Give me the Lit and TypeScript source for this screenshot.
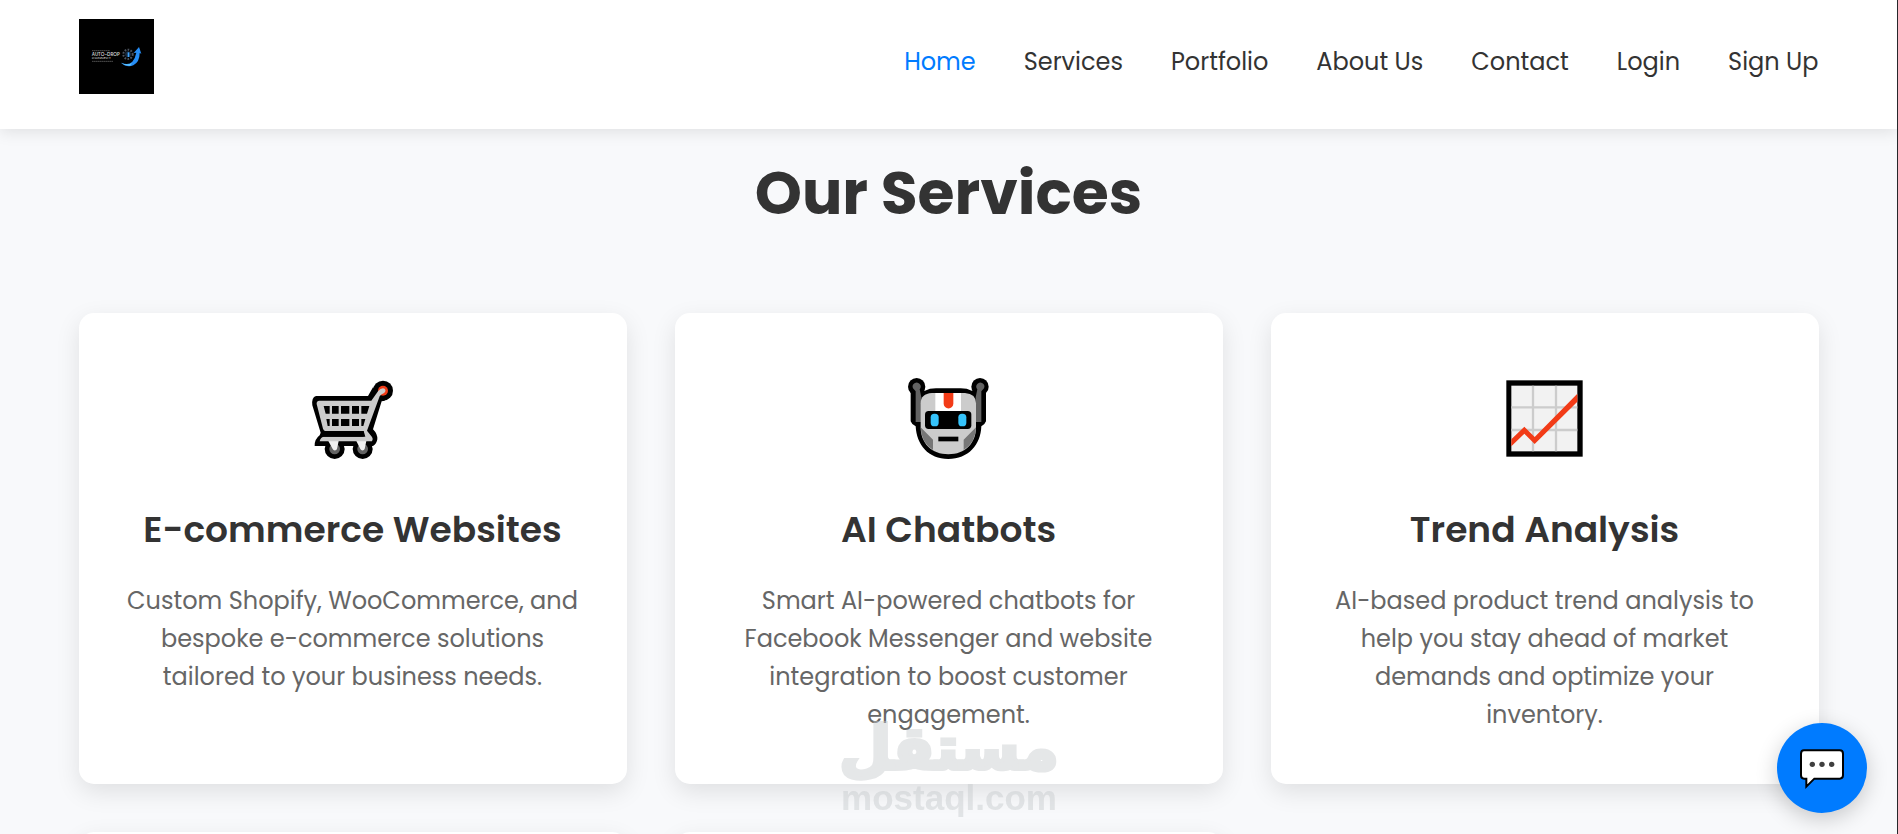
import { LitElement, html, css, svg, nothing } from "lit";
import { customElement, property } from "lit/decorators.js";

const cart = svg`
<svg viewBox="63 51 252 252" width="84" height="84" aria-hidden="true">
  <path d="M78 108 H234 L249 82 L285 122 L275 124 L249 208 Q263 222 262 238 Q260 252 249 258 H74 Q73 238 89 226 L92 218 L67 136 Q64 112 78 108Z" fill="#000"/>
  <circle cx="279" cy="92" r="30" fill="#000"/>
  <circle cx="134" cy="267" r="30" fill="#000"/><circle cx="218" cy="267" r="30" fill="#000"/>
  <circle cx="279" cy="92" r="15" fill="#f23b17"/>
  <circle cx="134" cy="267" r="16" fill="#636363"/><circle cx="218" cy="267" r="16" fill="#636363"/>
  <path d="M115 243 h31 l-5 24 a7 7 0 0 1 -13 0z M199 243 h30 l-5 24 a7 7 0 0 1 -13 0z" fill="#f0f0f0"/>
  <path d="M89 244 Q91 230 104 230 H226 L221 213 H105 Q101 211 99 206 L80 132 Q79 123 88 122 H244 L264 94
    Q274 82 284 86 Q290 93 281 100 Q273 103 269 109 L231 212 L246 231 Q251 238 246 244Z" fill="#ccc"/>
  <path d="M101 138 h18 v23 h-12z M126 138 h20 v23 h-20z M153 138 h25 v23 h-25z M186 138 h21 v23 h-21z M214 138 h24 l-7 23 h-17z
    M109 177 h10 v21 h-6z M126 177 h20 v21 h-20z M153 177 h25 v21 h-25z M186 177 h21 v21 h-21z M214 177 h12 l-6 21 h-6z
    M98 214 H221 V230 H104 Q98 228 92 232Z" fill="#000"/>
</svg>`;

const robot = svg`
<svg viewBox="51 51 252 252" width="84" height="84" aria-hidden="true">
  <circle cx="80" cy="80" r="26" fill="#000"/><circle cx="270" cy="80" r="26" fill="#000"/>
  <path d="M62 90 L105 92 Q118 85 138 85 H212 Q232 85 245 92 L288 90 V184 Q284 195 274 199
    C272 255 235 297 175 297 C115 297 80 255 77 199 Q66 195 62 184Z" fill="#000"/>
  <path d="M69 85 A12 12 0 1 1 89 88 L94 112 V186 H77 V94Z M282 85 A12 12 0 1 0 262 88 L257 112 V186 H274 V94Z" fill="#636363"/>
  <path d="M92 130 Q92 101 126 99 H225 Q258 101 258 130 V202 C258 250 225 283 175 283 C125 283 92 250 92 202Z" fill="#ccc"/>
  <path d="M92 202 L129 239 V270 Q93 248 92 202Z M258 202 L221 239 V270 Q257 248 258 202Z" fill="#777"/>
  <path d="M136 99 H213 V154 H136Z" fill="#fff"/>
  <path d="M161 99 H190 V131 A14.500 14.500 0 0 1 161 131Z" fill="#f23b17"/>
  <rect x="105" y="153" width="139" height="54" rx="11" fill="#000"/>
  <rect x="122" y="161" width="24" height="38" rx="11" fill="#35c3fb"/>
  <rect x="205" y="161" width="24" height="38" rx="11" fill="#35c3fb"/>
  <rect x="145" y="230" width="60" height="14" fill="#000"/>
</svg>`;

const chart = svg`
<svg viewBox="39 51 252 252" width="84" height="84" aria-hidden="true">
  <rect x="49" y="61" width="229" height="229" fill="#000"/>
  <rect x="64" y="77" width="198" height="197" fill="#f2f2f2"/>
  <path d="M129 77 V274 M198 77 V274 M64 142 H262 M64 210 H262" stroke="#ccc" stroke-width="7"/>
  <path d="M64 238 L103 200 L134 231 L262 101 V125 L134 252 L103 221 L64 259Z" fill="#f23b17"/>
</svg>`;

const brand = svg`
<svg class="logo" viewBox="0 0 225 225" role="img" aria-label="Auto-Drop Connect">
  <rect width="225" height="225" fill="#000"/>
  <path d="M39 95 H93 M39 127 H102" stroke="#777" stroke-width="2" stroke-dasharray="5 1"/>
  <text x="38" y="111" fill="#ddd" font-size="14" font-weight="500">AUTO-DROP</text>
  <text x="38" y="121" fill="#bbb" font-size="12" font-weight="500">CONNECT</text>
  <circle cx="147" cy="106" r="14" fill="none" stroke="#4c535e" stroke-width="6" stroke-dasharray="5 4"/>
  <circle cx="147" cy="106" r="9" fill="#17283c"/>
  <path d="M146 100 h5 v14 h-5z" fill="#3ba4ff"/>
  <path d="M126 131 Q148 141 160 128 Q169 117 172 101 L164 102 L180 84 L187 104 L182 102 Q182 129 163 139 Q143 147 126 131Z" fill="#268df5"/>
  <path d="M126 131 Q145 140 159 132 L154 140 Q139 142 126 131Z" fill="#5cc3ff"/>
</svg>`;

const bubble = svg`
<svg viewBox="114 138 144 132" width="48" height="44" aria-hidden="true">
  <path d="M132 151 H239 Q249 151 249 161 V226 Q249 236 239 236 H163 L139 260 V236 H132 Q123 236 123 226 V161 Q123 151 132 151Z"
    fill="#fff" stroke="#000" stroke-width="6"/>
  <circle cx="157" cy="193" r="8" fill="#3f3f3f"/><circle cx="186" cy="193" r="8" fill="#3f3f3f"/><circle cx="215" cy="193" r="8" fill="#3f3f3f"/>
</svg>`;

const links = ["Home", "Services", "Portfolio", "About Us", "Contact", "Login", "Sign Up"];

const services = [
  { icon: cart, title: "E-commerce Websites", text: "Custom Shopify, WooCommerce, and bespoke e-commerce solutions tailored to your business needs." },
  { icon: robot, title: "AI Chatbots", text: "Smart AI-powered chatbots for Facebook Messenger and website integration to boost customer engagement." },
  { icon: chart, title: "Trend Analysis", text: "AI-based product trend analysis to help you stay ahead of market demands and optimize your inventory." },
  { icon: nothing, title: "", text: "" },
  { icon: nothing, title: "", text: "" },
];

@customElement("service-card")
class ServiceCard extends LitElement {
  @property({ attribute: false }) service: any;

  static styles = css`
    :host {
      display: block;
      box-sizing: border-box;
      min-height: 240px;
      padding: 48px 48px 50px;
      border-radius: 15px;
      background: #fff;
      box-shadow: 0 8px 24px rgba(0, 0, 0, 0.1);
      text-align: center;
    }
    .icon {
      display: flex;
      align-items: center;
      justify-content: center;
      height: 116px;
      margin-bottom: 24px;
    }
    .title {
      margin: 0 0 23px;
      font-size: 36px;
      line-height: 58px;
      font-weight: 600;
      color: #333;
    }
    .text {
      margin: 0;
      font-size: 24px;
      line-height: 38px;
      color: #666;
    }
  `;

  render() {
    const s = this.service;
    if (!s.title) return nothing;
    return html`
      <div class="icon">${s.icon}</div>
      <h3 class="title">${s.title}</h3>
      <p class="text">${s.text}</p>
    `;
  }
}

@customElement("app-root")
class AppRoot extends LitElement {
  static styles = css`
    :host {
      display: block;
      box-sizing: border-box;
      height: 100vh;
      overflow: hidden;
      border-right: 1px solid #26282b;
      background: #f8f9fb;
      color: #333;
      font-family: Poppins, Inter, sans-serif;
    }
    .header {
      position: relative;
      z-index: 1;
      padding: 19px 0 24px;
      background: #fff;
      box-shadow: 0 3px 15px rgba(0, 0, 0, 0.1);
    }
    .wrap {
      box-sizing: border-box;
      max-width: 1800px;
      margin: 0 auto;
      padding: 0 30px;
    }
    .bar {
      display: flex;
      align-items: center;
      justify-content: space-between;
    }
    .brand {
      padding-bottom: 11px;
    }
    .logo {
      display: block;
      width: 75px;
      height: 75px;
    }
    .nav {
      display: flex;
      gap: 48px;
    }
    .link {
      color: #333;
      font-size: 24px;
      line-height: 38px;
      text-decoration: none;
    }
    .link.active {
      color: #007bff;
    }
    .services {
      padding-top: 16px;
    }
    .heading {
      margin: 0 0 72px;
      font-size: 60px;
      line-height: 96px;
      font-weight: 700;
      text-align: center;
    }
    .grid {
      display: grid;
      grid-template-columns: repeat(3, 1fr);
      gap: 48px;
    }
    .chat {
      position: fixed;
      right: 31px;
      bottom: 21px;
      z-index: 3;
      display: flex;
      align-items: center;
      justify-content: center;
      width: 90px;
      height: 90px;
      padding: 0;
      border: 0;
      border-radius: 50%;
      background: #007bff;
      box-shadow: 0 6px 22px rgba(0, 0, 0, 0.2);
    }
    .mark {
      position: fixed;
      left: 50%;
      bottom: 16px;
      z-index: 2;
      display: flex;
      flex-direction: column;
      align-items: center;
      transform: translateX(-50%);
      color: #c6c9cc;
      opacity: 0.45;
      pointer-events: none;
    }
    .mark-ar {
      font: 700 60px/60px "DejaVu Sans", sans-serif;
      -webkit-text-stroke: 4px #c6c9cc;
      stroke-linejoin: round;
    }
    .mark-en {
      font: 700 35px/40px "Liberation Sans", sans-serif;
    }
  `;

  render() {
    return html`
      <header class="header">
        <div class="wrap bar">
          <a class="brand" href="#">${brand}</a>
          <nav class="nav">
            ${links.map((l, i) => html`<a class="link ${i ? "" : "active"}" href="#">${l}</a>`)}
          </nav>
        </div>
      </header>
      <main class="wrap services">
        <h2 class="heading">Our Services</h2>
        <div class="grid">
          ${services.map((s) => html`<service-card .service=${s}></service-card>`)}
        </div>
      </main>
      <div class="mark">
        <span class="mark-ar" lang="ar" dir="rtl">مستقل</span>
        <span class="mark-en">mostaql.com</span>
      </div>
      <button class="chat" aria-label="Open chat">${bubble}</button>
    `;
  }
}
